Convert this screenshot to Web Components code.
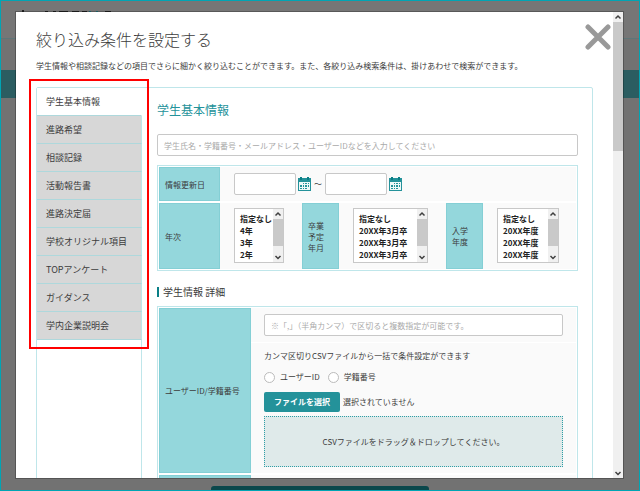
<!DOCTYPE html>
<html lang="ja">
<head>
<meta charset="utf-8">
<meta name="viewport" content="width=device-width, initial-scale=1">
<title>絞り込み条件を設定する</title>
<style>
  :root {
    --teal: #24929a;
    --teal-dark: #0a7f86;
    --aqua: #94d7dc;
    --line: #bfe6ea;
    --grey-line: #c8c8c8;
    --text: #3c3c3c;
  }
  html, body {
    height: 100%;
  }
  body {
    margin: 0;
    overflow: hidden;
    color: var(--text);
    font: 8px/12px "Noto Sans CJK JP", "Noto Sans", sans-serif;
  }
</style>
</head>
<body>
<page-backdrop>
  <search-dialog>
    <span slot="title">絞り込み条件を設定する</span>
    <span slot="intro">学生情報や相談記録などの項目でさらに細かく絞り込むことができます。また、各絞り込み検索条件は、掛けあわせで検索ができます。</span>
    <tab-nav slot="tabs"></tab-nav>
    <basic-panel slot="panel"></basic-panel>
  </search-dialog>
</page-backdrop>

<script>
class PageBackdrop extends HTMLElement {
  constructor() {
    super()
    this.attachShadow({ mode: 'open' })
    this.shadowRoot.innerHTML = `
      <style>
        :host {
          position: relative;
          display: flex;
          flex-direction: column;
          box-sizing: border-box;
          height: 100vh;
          border: 1px solid #00a5b4;
          background: #727272;
          overflow: hidden;
        }
        header {
          height: 37px;
          border-bottom: 1px solid #5f7678;
          background: #767676;
        }
        header svg {
          display: block;
          margin: 8px 0 0 20px;
        }
        .band {
          height: 28px;
          margin-top: 31px;
          background: #2b5d61;
        }
        footer {
          display: flex;
          justify-content: center;
          margin-top: auto;
          padding: 0 16px;
        }
        .action {
          width: 36%;
          height: 4px;
          border-radius: 3px 3px 0 0;
          background: #0b484c;
        }
        .layer {
          position: absolute;
          inset: 11px 16px 12px 15px;
          box-shadow: 0 0 0 1px rgba(0, 0, 0, .25);
        }
      </style>
      <header>
        <svg width="92" height="6" viewBox="0 0 92 6" aria-hidden="true">
          <path d="M1 1h2v5H1zM24 2h3v4h-3zM32 2h3v4h-3zM38 2h9v2h-9zM51 2h7v2h-7zM61 2h5v2h-5z" fill="#222"/>
          <path d="M68 2h2v4h-2zM75 2h2v4h-2z" fill="#207a82"/>
          <path d="M84 2h6v2h-6z" fill="#222"/>
        </svg>
      </header>
      <div class="band"></div>
      <footer><div class="action"></div></footer>
      <div class="layer"><slot></slot></div>
    `
  }
}

class ScrollBar extends HTMLElement {
  constructor() {
    super()
    this.attachShadow({ mode: 'open' })
    this.shadowRoot.innerHTML = `
      <style>
        :host {
          display: flex;
          flex: none;
          flex-direction: column;
          width: 10px;
          background: #f0f0f0;
        }
        svg {
          display: block;
          flex: none;
          width: 10px;
          height: 10px;
          fill: none;
          stroke: #404040;
          stroke-width: 1.5;
        }
        .track {
          flex: 1;
        }
        .thumb {
          height: var(--thumb, 30%);
          background: #c9c9c9;
        }
      </style>
      <svg viewBox="0 0 10 10" aria-hidden="true"><path d="M2.500 6.500 5 4l2.500 2.500"/></svg>
      <div class="track"><div class="thumb"></div></div>
      <svg viewBox="0 0 10 10" aria-hidden="true"><path d="M2.500 4 5 6.500 7.500 4"/></svg>
    `
  }
}

class SearchDialog extends HTMLElement {
  constructor() {
    super()
    this.attachShadow({ mode: 'open' })
    this.shadowRoot.innerHTML = `
      <style>
        :host {
          display: block;
          height: 100%;
          background: #fff;
        }
        section {
          display: flex;
          height: 100%;
        }
        .body {
          flex: 1;
          min-width: 0;
          padding: 12px 20px 0;
          overflow: hidden;
        }
        .head {
          display: flex;
          justify-content: space-between;
          height: 34px;
        }
        h1 {
          margin: 3px 0 0;
          font-size: 16px;
          line-height: 24px;
          font-weight: 300;
        }
        button {
          width: 26px;
          height: 26px;
          margin: 0 -18px 0 0;
          padding: 0;
          border: 0;
          background: none;
        }
        button svg {
          display: block;
        }
        p {
          margin: 2px 0 15px;
        }
        .frame {
          display: grid;
          grid-template-columns: 105px minmax(0, 1fr);
          min-height: 600px;
          border: 1px solid var(--line);
          border-radius: 2px;
        }
        scroll-bar {
          --thumb: 29%;
        }
      </style>
      <section role="dialog" aria-labelledby="title">
        <div class="body">
          <div class="head">
            <h1 id="title"><slot name="title"></slot></h1>
            <button type="button" aria-label="閉じる">
              <svg width="26" height="26" viewBox="0 0 26 26" aria-hidden="true">
                <path d="M3 3l20 20M23 3 3 23" fill="none" stroke="#999" stroke-width="5" stroke-linecap="round"/>
              </svg>
            </button>
          </div>
          <p><slot name="intro"></slot></p>
          <div class="frame">
            <slot name="tabs"></slot>
            <slot name="panel"></slot>
          </div>
        </div>
        <scroll-bar></scroll-bar>
      </section>
    `
  }
}

class TabNav extends HTMLElement {
  constructor() {
    super()
    this.attachShadow({ mode: 'open' })
    this.shadowRoot.innerHTML = `
      <style>
        :host {
          position: relative;
          display: block;
          border-right: 1px solid var(--line);
        }
        ul {
          list-style: none;
          margin: 0 -1px 0 0;
          padding: 0;
        }
        a {
          display: block;
          height: 27px;
          padding-left: 9px;
          border-right: 1px solid var(--line);
          border-bottom: 1px solid #aed8dc;
          background: #d7d7d7;
          color: inherit;
          font-size: 9px;
          line-height: 28px;
          text-decoration: none;
        }
        a[aria-current] {
          border-right-color: #fff;
          background: #fff;
        }
        .mark {
          position: absolute;
          inset: -9px -8px auto -8px;
          height: 266px;
          border: 2px solid #f00;
          pointer-events: none;
        }
      </style>
      <nav aria-label="検索条件"><ul></ul></nav>
      <div class="mark"></div>
    `
  }

  connectedCallback() {
    const list = this.shadowRoot.querySelector('ul')
    const names = [
      '学生基本情報', '進路希望', '相談記録', '活動報告書', '進路決定届',
      '学校オリジナル項目', 'TOPアンケート', 'ガイダンス', '学内企業説明会'
    ]

    names.forEach((name, i) => {
      const li = document.createElement('li')
      const a = document.createElement('a')
      a.href = `#tab-${i + 1}`
      a.textContent = name
      if (i === 0) a.setAttribute('aria-current', 'page')
      li.append(a)
      list.append(li)
    })
  }
}

class TextField extends HTMLElement {
  constructor() {
    super()
    this.attachShadow({ mode: 'open' })
    this.shadowRoot.innerHTML = `
      <style>
        :host {
          display: block;
        }
        input {
          display: block;
          box-sizing: border-box;
          width: 100%;
          height: 22px;
          padding: 0 6px;
          border: 1px solid var(--grey-line);
          border-radius: 2px;
          background: #fff;
          color: inherit;
          font: inherit;
        }
        input::placeholder {
          color: #aaa;
        }
      </style>
      <input type="text">
    `
  }

  connectedCallback() {
    const input = this.shadowRoot.querySelector('input')
    input.placeholder = this.getAttribute('placeholder') || ''
    input.setAttribute('aria-label', this.getAttribute('label'))
  }
}

class DateField extends HTMLElement {
  constructor() {
    super()
    this.attachShadow({ mode: 'open' })
    this.shadowRoot.innerHTML = `
      <style>
        :host {
          display: flex;
          align-items: center;
          gap: 2px;
        }
        text-field {
          width: 62px;
        }
        button {
          width: 13px;
          height: 15px;
          padding: 0;
          border: 0;
          background: none;
        }
        svg {
          display: block;
        }
      </style>
      <text-field></text-field>
      <button type="button" aria-label="カレンダー">
        <svg width="13" height="15" viewBox="0 0 13 15" aria-hidden="true">
          <path d="M0 1h13v13H0z" fill="#24929a"/>
          <path d="M2 0h2v3H2zM9 0h2v3H9z" fill="#0a7f86"/>
          <path d="M1 5h11v8H1z" fill="#eef8f8"/>
          <path d="M5 6h1v1H5zM7 6h2v1H7zM10 6h1v1h-1zM2 8h2v2H2zM5 8h1v2H5zM7 8h2v2H7zM10 8h1v2h-1zM2 11h2v1H2zM5 11h1v1H5zM7 11h2v1H7z" fill="#24929a"/>
        </svg>
      </button>
    `
  }

  connectedCallback() {
    this.shadowRoot.querySelector('text-field')
      .setAttribute('label', this.getAttribute('label'))
  }
}

class ListBox extends HTMLElement {
  constructor() {
    super()
    this.attachShadow({ mode: 'open' })
    this.shadowRoot.innerHTML = `
      <style>
        :host {
          display: flex;
          box-sizing: border-box;
          height: 55px;
          border: 1px solid var(--grey-line);
          background: #fff;
        }
        select {
          flex: 1;
          min-width: 0;
          height: 53px;
          margin: 0;
          padding: 4px 0 0 5px;
          border: 0;
          outline: 0;
          background: none;
          overflow: hidden;
          scrollbar-width: none;
        }
        option {
          height: 12px;
          min-height: 12px;
          padding: 0;
          color: #222;
          font: bold 8px/12px "Noto Sans CJK JP", sans-serif;
        }
        scroll-bar {
          --thumb: 82%;
        }
      </style>
      <select multiple></select>
      <scroll-bar></scroll-bar>
    `
  }

  connectedCallback() {
    const select = this.shadowRoot.querySelector('select')
    select.setAttribute('aria-label', this.getAttribute('label'))
    this.getAttribute('options').split(',').forEach(text => {
      select.add(new Option(text))
    })
  }
}

class RadioOption extends HTMLElement {
  constructor() {
    super()
    this.attachShadow({ mode: 'open' })
    this.shadowRoot.innerHTML = `
      <style>
        :host {
          display: block;
        }
        label {
          display: flex;
          align-items: center;
          gap: 5px;
        }
        input {
          appearance: none;
          width: 11px;
          height: 11px;
          margin: 0;
          border: 1px solid #bbb;
          border-radius: 50%;
          background: #fff;
        }
        input:checked {
          border: 3px solid var(--teal);
        }
      </style>
      <label><input type="radio" name="key"><slot></slot></label>
    `
  }
}

class FilePicker extends HTMLElement {
  constructor() {
    super()
    this.attachShadow({ mode: 'open' })
    this.shadowRoot.innerHTML = `
      <style>
        :host {
          display: block;
        }
        .pick {
          display: flex;
          align-items: center;
          gap: 3px;
        }
        button {
          width: 76px;
          height: 20px;
          padding: 0;
          border: 0;
          border-radius: 2px;
          background: var(--teal);
          color: #fff;
          font: bold 8px/20px "Noto Sans CJK JP", sans-serif;
        }
        .drop {
          display: flex;
          align-items: center;
          justify-content: center;
          box-sizing: border-box;
          height: 51px;
          margin-top: 4px;
          border: 1px dotted #2f9ea6;
          background: #dfeaea;
        }
      </style>
      <div class="pick">
        <button type="button">ファイルを選択</button>
        <span>選択されていません</span>
      </div>
      <div class="drop">CSVファイルをドラッグ＆ドロップしてください。</div>
    `
  }
}

class ConditionTable extends HTMLElement {
  constructor() {
    super()
    this.attachShadow({ mode: 'open' })
    this.shadowRoot.innerHTML = `
      <style>
        :host {
          display: grid;
          gap: 2px;
          padding: 1px;
          border: 1px solid var(--line);
        }
      </style>
      <slot></slot>
    `
  }
}

class ConditionRow extends HTMLElement {
  constructor() {
    super()
    this.attachShadow({ mode: 'open' })
    this.shadowRoot.innerHTML = `
      <style>
        :host {
          display: flex;
          background: #fafafa;
        }
        ::slotted(b) {
          display: flex;
          flex: none;
          align-items: center;
          box-sizing: border-box;
          width: 61px;
          padding: 0 5px;
          border: 1px solid #84cfd5;
          background: var(--aqua);
          font-weight: 400;
          line-height: 11px;
        }
        ::slotted(b.narrow) {
          width: 37px;
        }
        ::slotted(b.wide) {
          width: 92px;
        }
        ::slotted(div) {
          flex: 1;
          min-width: 0;
        }
        ::slotted(div.fixed) {
          flex: none;
        }
      </style>
      <slot></slot>
    `
  }
}

class BasicPanel extends HTMLElement {
  constructor() {
    super()
    this.attachShadow({ mode: 'open' })
    this.shadowRoot.innerHTML = `
      <style>
        :host {
          display: block;
          padding: 14px 14px 0 15px;
        }
        h2 {
          margin: 0 0 16px;
          color: var(--teal);
          font-size: 12px;
          line-height: 16px;
          font-weight: 400;
        }
        condition-table {
          margin-top: 9px;
        }
        .dates {
          display: flex;
          align-items: center;
          gap: 3px;
          height: 34px;
          padding-left: 14px;
        }
        .list {
          box-sizing: border-box;
          height: 66px;
          padding: 5px 0 0 14px;
        }
        .year {
          width: 82px;
        }
        .month {
          width: 107px;
        }
        .year list-box {
          width: 50px;
        }
        .month list-box {
          width: 75px;
        }
        .entry list-box {
          width: 62px;
        }
        h3 {
          display: flex;
          align-items: center;
          gap: 4px;
          margin: 15px 0 0;
          font-size: 10px;
          line-height: 12px;
          font-weight: 400;
        }
        h3::before {
          content: "";
          width: 2px;
          height: 10px;
          background: var(--teal-dark);
        }
        h3 + condition-table {
          margin-top: 8px;
        }
        .ids {
          box-sizing: border-box;
          height: 165px;
        }
        .code {
          padding: 6px 13px;
          border-bottom: 1px solid #fff;
        }
        .csv {
          padding: 7px 13px 0;
        }
        .csv p {
          margin: 0;
        }
        .radios {
          display: flex;
          gap: 8px;
          margin: 9px 0;
        }
        .next {
          height: 60px;
        }
      </style>
      <h2>学生基本情報</h2>
      <text-field label="キーワード" placeholder="学生氏名・学籍番号・メールアドレス・ユーザーIDなどを入力してください"></text-field>
      <condition-table>
        <condition-row>
          <b>情報更新日</b>
          <div class="dates">
            <date-field label="開始日"></date-field>
            <span>～</span>
            <date-field label="終了日"></date-field>
          </div>
        </condition-row>
        <condition-row>
          <b>年次</b>
          <div class="list year fixed"><list-box label="年次" options="指定なし,4年,3年,2年,1年"></list-box></div>
          <b class="narrow">卒業<br>予定<br>年月</b>
          <div class="list month fixed"><list-box label="卒業予定年月" options="指定なし,20XX年3月卒,20XX年3月卒,20XX年3月卒,20XX年3月卒"></list-box></div>
          <b class="narrow">入学<br>年度</b>
          <div class="list entry"><list-box label="入学年度" options="指定なし,20XX年度,20XX年度,20XX年度,20XX年度"></list-box></div>
        </condition-row>
      </condition-table>
      <h3>学生情報 詳細</h3>
      <condition-table>
        <condition-row>
          <b class="wide">ユーザーID/学籍番号</b>
          <div class="ids">
            <div class="code">
              <text-field label="ユーザーID/学籍番号" placeholder="※「,」（半角カンマ）で区切ると複数指定が可能です。"></text-field>
            </div>
            <div class="csv">
              <p>カンマ区切りCSVファイルから一括で条件設定ができます</p>
              <div class="radios">
                <radio-option>ユーザーID</radio-option>
                <radio-option>学籍番号</radio-option>
              </div>
              <file-picker></file-picker>
            </div>
          </div>
        </condition-row>
        <condition-row>
          <b class="wide"></b>
          <div class="next"></div>
        </condition-row>
      </condition-table>
    `
  }
}

customElements.define('scroll-bar', ScrollBar)
customElements.define('text-field', TextField)
customElements.define('date-field', DateField)
customElements.define('list-box', ListBox)
customElements.define('radio-option', RadioOption)
customElements.define('file-picker', FilePicker)
customElements.define('condition-row', ConditionRow)
customElements.define('condition-table', ConditionTable)
customElements.define('basic-panel', BasicPanel)
customElements.define('tab-nav', TabNav)
customElements.define('search-dialog', SearchDialog)
customElements.define('page-backdrop', PageBackdrop)
</script>
</body>
</html>
